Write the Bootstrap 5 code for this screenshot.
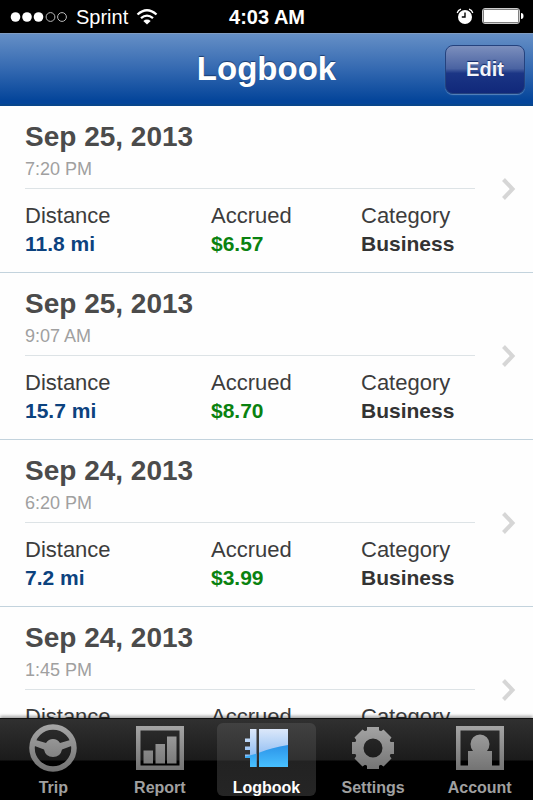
<!DOCTYPE html>
<html lang="en">
<head>
<meta charset="utf-8">
<meta name="viewport" content="width=device-width, initial-scale=1">
<title>Logbook</title>
<link href="https://cdn.jsdelivr.net/npm/bootstrap@5.3.0/dist/css/bootstrap.min.css" rel="stylesheet">
<style>
body { font-family: "Liberation Sans", Arial, sans-serif; background: #fff; }
.status-bar { background: #000; color: #fff; height: 33px; font-size: 20px; line-height: 34px; padding: 0 9px 0 10px; }
.status-side { flex: 1 1 0; }
.title-bar { display: grid; grid-template-columns: 1fr auto 1fr; align-items: center; height: 73px; padding: 0 8px;
  background: linear-gradient(#658fc6, #3469b1 50%, #04459a 95%); border-top: 1px solid #7f9cc2; border-bottom: 2px solid #08468c; }
.title-bar h1 { grid-column: 2; font-size: 33px; line-height: 40px; color: #fff; text-shadow: 0 -1px 1px #1c3c6e; }
.edit-btn { justify-self: end; width: 80px; height: 49px; border-radius: 8px; padding: 0; font-size: 20px; font-weight: 700; color: #f2f4fa;
  background: linear-gradient(#7c8fbd, #4a63a2 48%, #1b3585 58%, #10287a); border: 1px solid #24427e; box-shadow: 0 1px 1px #5784bd; text-shadow: 0 -1px 1px #122a66; }
.edit-btn:hover { color: #fff; }
.trip-item { display: flex; align-items: center; height: 167px; padding: 0 17px 0 25px; border-color: #c3d3dd; color: #3c3c3c; background: #fefefe; }
.list-group-flush > .trip-item:last-child { border-bottom-width: 1px; }
.trip-main { flex: 1; margin-right: 27px; }
.trip-date { font-size: 28px; line-height: 34px; font-weight: 700; color: #4b4b4b; margin: 0; }
.trip-time { font-size: 18px; line-height: 24px; color: #a0a0a0; padding-bottom: 7px; margin-top: 3px; border-bottom: 1px solid #dde3e6; }
.trip-facts { display: grid; grid-template-columns: 186fr 150fr 114fr; margin: 12px 0 0; }
.trip-facts dt { font-size: 22px; line-height: 29px; font-weight: 400; }
.trip-facts dd { font-size: 21px; line-height: 28px; font-weight: 700; margin: 0; color: #333; }
.trip-facts .miles { color: #0c427e; }
.trip-facts .money { color: #0a8210; }
.tab-bar { height: 82px; background: linear-gradient(#303030, #1b1b1b 41px, #000 42px); border-top: 1px solid #111; box-shadow: 0 -2px 3px rgba(0,0,0,.35); z-index: 1; }
.tab-link { flex: 1 1 0; margin: 4px; padding: 0; border-radius: 6px; color: #a0a0a0; font-size: 16px; line-height: 17px; font-weight: 700; text-decoration: none; }
.tab-link svg { margin-bottom: 6px; }
.tab-link.active { color: #fff; background: linear-gradient(#414141, #303030 37px, #222 38px, #252525); }
</style>
<script src="https://cdn.jsdelivr.net/npm/bootstrap@5.3.0/dist/js/bootstrap.bundle.min.js"></script>
</head>
<body>
<div class="d-flex flex-column vh-100 overflow-hidden">
  <div class="status-bar d-flex flex-shrink-0">
    <div class="status-side d-flex align-items-center">
      <svg width="58" height="12" viewBox="0 0 58 12" fill="#fff" aria-hidden="true"><circle cx="5.500" cy="6" r="4.800"/><circle cx="17" cy="6" r="4.800"/><circle cx="28.500" cy="6" r="4.800"/><g fill="none" stroke="#bbb"><circle cx="40.500" cy="6" r="4.400"/><circle cx="52" cy="6" r="4.400"/></g></svg>
      <span class="ms-1 me-2 ps-1">Sprint</span>
      <svg width="22" height="16" viewBox="0 0 22 16" fill="none" stroke="#fff" stroke-width="2.300" aria-hidden="true"><path d="M1.500 5.500Q11-3 20.500 5.500M5 9.200Q11 4 17 9.200"/><path d="M11 15.500L7.300 11.900Q11 9 14.700 11.900Z" fill="#fff" stroke="none"/></svg>
    </div>
    <div class="fw-bold">4:03 AM</div>
    <div class="status-side d-flex align-items-center justify-content-end">
      <svg class="me-2" width="18" height="17" viewBox="0 0 18 17" aria-hidden="true"><circle cx="9" cy="9" r="7" fill="#fff"/><path d="M1.200 5Q2 2 5 1.200M13 1.200Q16 2 16.800 5" fill="none" stroke="#fff" stroke-width="1.300"/><path d="M9 4.500V9H5.800" fill="none" stroke="#000" stroke-width="1.400"/></svg>
      <svg width="42" height="17" viewBox="0 0 42 17" aria-hidden="true"><rect x=".5" y=".5" width="37" height="15" rx="2.500" fill="none" stroke="#ccc"/><rect x="1.500" y="1.500" width="35" height="13" rx="1" fill="#fff"/><path d="M39 5Q41.500 5 41.500 8T39 11Z" fill="#fff"/></svg>
    </div>
  </div>

  <header class="title-bar flex-shrink-0">
    <h1 class="fw-bold m-0">Logbook</h1>
    <button type="button" class="btn edit-btn">Edit</button>
  </header>

  <main class="flex-fill overflow-hidden">
    <div class="list-group list-group-flush">
      <a href="#" class="list-group-item list-group-item-action trip-item">
        <div class="trip-main">
          <h2 class="trip-date">Sep 25, 2013</h2>
          <div class="trip-time">7:20 PM</div>
          <dl class="trip-facts"><div><dt>Distance</dt><dd class="miles">11.8 mi</dd></div><div><dt>Accrued</dt><dd class="money">$6.57</dd></div><div><dt>Category</dt><dd>Business</dd></div></dl>
        </div>
        <svg width="14" height="22" viewBox="0 0 14 22" fill="none" stroke="#d6d6d6" stroke-width="4" aria-hidden="true"><path d="M1.500 1.500L10.500 11L1.500 20.500"/></svg>
      </a>
      <a href="#" class="list-group-item list-group-item-action trip-item">
        <div class="trip-main">
          <h2 class="trip-date">Sep 25, 2013</h2>
          <div class="trip-time">9:07 AM</div>
          <dl class="trip-facts"><div><dt>Distance</dt><dd class="miles">15.7 mi</dd></div><div><dt>Accrued</dt><dd class="money">$8.70</dd></div><div><dt>Category</dt><dd>Business</dd></div></dl>
        </div>
        <svg width="14" height="22" viewBox="0 0 14 22" fill="none" stroke="#d6d6d6" stroke-width="4" aria-hidden="true"><path d="M1.500 1.500L10.500 11L1.500 20.500"/></svg>
      </a>
      <a href="#" class="list-group-item list-group-item-action trip-item">
        <div class="trip-main">
          <h2 class="trip-date">Sep 24, 2013</h2>
          <div class="trip-time">6:20 PM</div>
          <dl class="trip-facts"><div><dt>Distance</dt><dd class="miles">7.2 mi</dd></div><div><dt>Accrued</dt><dd class="money">$3.99</dd></div><div><dt>Category</dt><dd>Business</dd></div></dl>
        </div>
        <svg width="14" height="22" viewBox="0 0 14 22" fill="none" stroke="#d6d6d6" stroke-width="4" aria-hidden="true"><path d="M1.500 1.500L10.500 11L1.500 20.500"/></svg>
      </a>
      <a href="#" class="list-group-item list-group-item-action trip-item">
        <div class="trip-main">
          <h2 class="trip-date">Sep 24, 2013</h2>
          <div class="trip-time">1:45 PM</div>
          <dl class="trip-facts"><div><dt>Distance</dt><dd class="miles">&nbsp;</dd></div><div><dt>Accrued</dt><dd class="money">&nbsp;</dd></div><div><dt>Category</dt><dd>&nbsp;</dd></div></dl>
        </div>
        <svg width="14" height="22" viewBox="0 0 14 22" fill="none" stroke="#d6d6d6" stroke-width="4" aria-hidden="true"><path d="M1.500 1.500L10.500 11L1.500 20.500"/></svg>
      </a>
    </div>
  </main>

  <nav class="tab-bar d-flex flex-shrink-0" aria-label="Sections">
    <a href="#" class="tab-link d-flex flex-column align-items-center justify-content-end">
      <svg width="50" height="50" viewBox="0 0 50 50" aria-hidden="true">
        <defs><linearGradient id="metal" gradientUnits="userSpaceOnUse" x1="0" y1="0" x2="0" y2="50"><stop offset="0" stop-color="#a8a8a8"/><stop offset="1" stop-color="#707070"/></linearGradient></defs>
        <circle cx="25" cy="25" r="21" fill="none" stroke="url(#metal)" stroke-width="5.500"/>
        <path d="M6 16.500L18 20Q20.500 16 25 16T32 20L44 16.500L46 22L34 26.500Q32.500 34 25 34T16 26.500L4 22Z" fill="url(#metal)"/>
      </svg>Trip</a>
    <a href="#" class="tab-link d-flex flex-column align-items-center justify-content-end">
      <svg width="50" height="50" viewBox="0 0 50 50" fill="url(#metal)" aria-hidden="true"><path fill-rule="evenodd" d="M1 3H49V47H1ZM5.500 7.500V42.500H44.500V7.500Z"/><path d="M8.500 27.500H18V40.500H8.500ZM20.500 21H30V40.500H20.500ZM32 13.500H41.500V40.500H32Z"/></svg>Report</a>
    <a href="#" class="tab-link active d-flex flex-column align-items-center justify-content-end" aria-current="page">
      <svg width="50" height="50" viewBox="0 0 50 50" aria-hidden="true">
        <defs><linearGradient id="paper" x1="0" y1="0" x2="0" y2="1"><stop offset="0" stop-color="#dce8fa"/><stop offset="1" stop-color="#72adf0"/></linearGradient><linearGradient id="wave" x1="0" y1="0" x2="0" y2="1"><stop offset="0" stop-color="#2b93e8"/><stop offset="1" stop-color="#48c0ff"/></linearGradient>
        <clipPath id="book"><path d="M9 6H15.500V44H9V35H4V31.500H9V27H4V23.500H9V19H4V15.500H9ZM18 6H47V44H18Z"/></clipPath></defs>
        <g clip-path="url(#book)"><path d="M0 6H50V44H0Z" fill="url(#paper)"/><path d="M0 34Q10 33 20 29T47 22V44H0Z" fill="url(#wave)"/></g>
      </svg>Logbook</a>
    <a href="#" class="tab-link d-flex flex-column align-items-center justify-content-end">
      <svg width="50" height="50" viewBox="0 0 50 50" aria-hidden="true">
        <circle cx="25" cy="25" r="14" fill="none" stroke="url(#metal)" stroke-width="9"/>
        <g fill="url(#metal)"><path d="M19 4H31V13H19ZM19 37H31V46H19ZM4 19H13V31H4ZM37 19H46V31H37Z"/><path d="M14.500 6.500L21 11L11 21L6.500 14.500ZM35.500 6.500L29 11L39 21L43.500 14.500ZM6.500 35.500L11 29L21 39L14.500 43.500ZM43.500 35.500L39 29L29 39L35.500 43.500Z"/></g>
      </svg>Settings</a>
    <a href="#" class="tab-link d-flex flex-column align-items-center justify-content-end">
      <svg width="50" height="50" viewBox="0 0 50 50" fill="url(#metal)" aria-hidden="true"><path fill-rule="evenodd" d="M1 3H49V47H1ZM5.500 7.500V42.500H44.500V7.500Z"/><path d="M13 43V28H18Q15.500 25 15.500 21A9.500 9.500 0 0 1 34.500 21Q34.500 25 32 28H37V43Z"/></svg>Account</a>
  </nav>
</div>
</body>
</html>
